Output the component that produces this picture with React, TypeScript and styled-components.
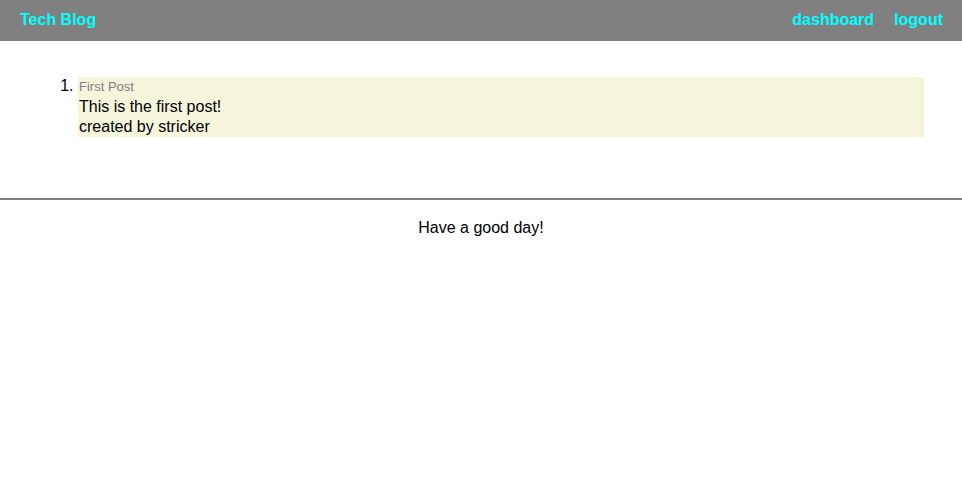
import React from "react";
import styled, { createGlobalStyle } from "styled-components";

const GlobalStyle = createGlobalStyle`
  * { box-sizing: border-box; }
  body {
    margin: 0;
    background: #fff;
    color: #000;
    font-family: "Liberation Sans", Arial, Helvetica, sans-serif;
    font-size: 16px;
    line-height: 20px;
  }
`;

const Header = styled.header`
  display: flex;
  justify-content: space-between;
  align-items: center;
  padding: 10px 19px 11px 20px;
  background: gray;
`;

const Nav = styled.nav`
  display: flex;
  gap: 20px;
`;

const HeaderLink = styled.a`
  color: aqua;
  font-weight: bold;
  text-decoration: none;
`;

const Main = styled.main`
  padding: 36px 38px 61px;
`;

const PostList = styled.ol`
  margin: 0;
  padding-left: 40px;
`;

const Post = styled.li`
  background: beige;
  line-height: 18px;
`;

const PostHeading = styled.div`
  padding: 0 0 2px 1px;
`;

const PostLine = styled.div`
  padding-left: 1px;
  line-height: 20px;
`;

const PostTitle = styled.a`
  color: gray;
  font-size: 13px;
  line-height: 13px;
  text-decoration: none;
`;

const Footer = styled.footer`
  padding-top: 18px;
  border-top: 2px solid gray;
  text-align: center;
`;

const posts = [
  { id: 1, title: "First Post", text: "This is the first post!", author: "stricker" },
];

export default function App() {
  return (
    <>
      <GlobalStyle />
      <Header>
        <HeaderLink href="#home">Tech Blog</HeaderLink>
        <Nav>
          <HeaderLink href="#dashboard">dashboard</HeaderLink>
          <HeaderLink href="#logout">logout</HeaderLink>
        </Nav>
      </Header>
      <Main>
        <PostList>
          {posts.map((post) => (
            <Post key={post.id}>
              <PostHeading>
                <PostTitle href="#post">{post.title}</PostTitle>
              </PostHeading>
              <PostLine>{post.text}</PostLine>
              <PostLine>created by {post.author}</PostLine>
            </Post>
          ))}
        </PostList>
      </Main>
      <Footer>Have a good day!</Footer>
    </>
  );
}
